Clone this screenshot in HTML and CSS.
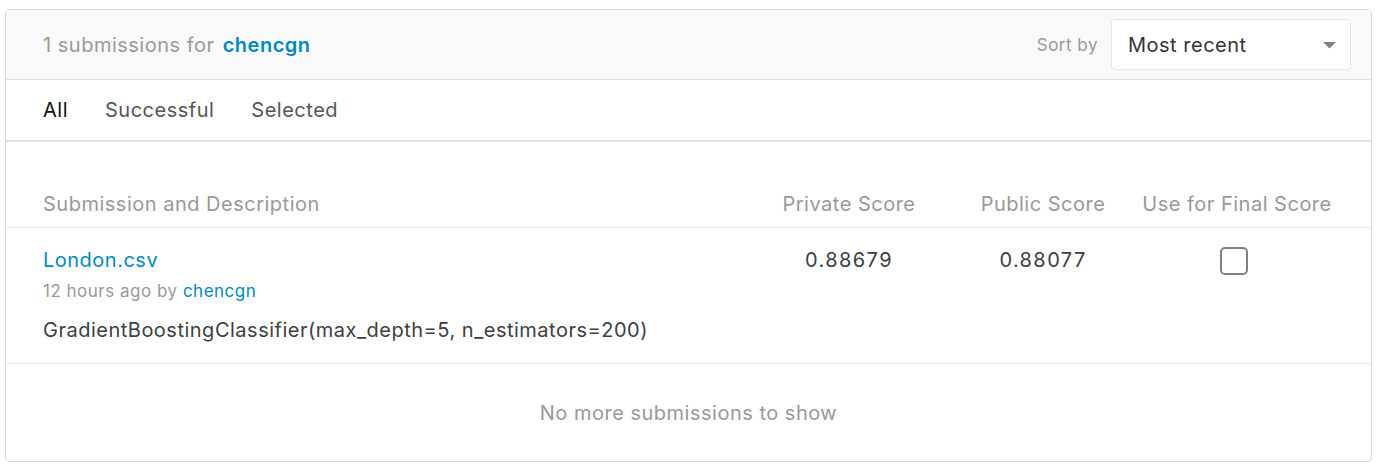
FILE: index.html
```html
<!DOCTYPE html>
<html>
<head>
<meta charset="utf-8">
<link rel="stylesheet" href="styles.css">
</head>
<body>
<div class="card">
  <div class="card-header">
    <div class="title">1 submissions for <a class="link strong" href="#">chencgn</a></div>
    <div class="sort">
      <span class="sort-label">Sort by</span>
      <div class="select">
        <span>Most recent</span>
        <svg class="caret" width="13" height="7" viewBox="0 0 13 7"><path d="M0 0 L13 0 L6.5 6.5 Z" fill="#808080"/></svg>
      </div>
    </div>
  </div>
  <div class="tabs">
    <span class="tab active">All</span>
    <span class="tab">Successful</span>
    <span class="tab">Selected</span>
  </div>
  <div class="table">
    <div class="thead">
      <div class="col-desc">Submission and Description</div>
      <div class="col-score">Private Score</div>
      <div class="col-score">Public Score</div>
      <div class="col-score">Use for Final Score</div>
    </div>
    <div class="row">
      <div class="col-desc">
        <a class="file link" href="#">London.csv</a>
        <div class="meta">12 hours ago by <a class="link" href="#">chencgn</a></div>
        <div class="desc">GradientBoostingClassifier(max_depth=5, n_estimators=200)</div>
      </div>
      <div class="col-score val">0.88679</div>
      <div class="col-score val">0.88077</div>
      <div class="col-score"><span class="checkbox"></span></div>
    </div>
    <div class="footer">No more submissions to show</div>
  </div>
</div>
</body>
</html>
```

FILE: styles.css
```css
* { box-sizing: border-box; }
body {
  margin: 0;
  background: #fff;
  font-family: Inter, "Noto Sans", sans-serif;
  color: #3c4043;
  letter-spacing: 0.5px;
}
.card {
  margin: 9px 0 0 5px;
  width: 1367px;
  border: 1px solid #dadada;
  border-radius: 4px;
  overflow: hidden;
}
.link { color: #008abc; text-decoration: none; }
.strong { font-weight: 600; }
.card-header {
  height: 70px;
  background: #f9f9f9;
  border-bottom: 1px solid #e0e0e0;
  display: flex;
  align-items: center;
  justify-content: space-between;
  padding: 0 20px 0 37px;
}
.title { font-size: 20px; color: #999; }
.title .link { margin-left: 2px; }
.sort { display: flex; align-items: center; gap: 13px; }
.sort-label { font-size: 17px; color: #999; }
.select {
  width: 240px;
  height: 51px;
  background: #fff;
  border: 1px solid #e6e6e6;
  border-radius: 4px;
  display: flex;
  align-items: center;
  justify-content: space-between;
  padding: 0 14px 0 16px;
  font-size: 20px;
  color: #333;
}
.caret { margin-top: 1px; }
.tabs {
  height: 62px;
  border-bottom: 2px solid #e0e0e0;
  display: flex;
  align-items: center;
  gap: 37px;
  padding: 0 37px;
  font-size: 20px;
  color: #555;
}
.tab.active { color: #111; }
.thead, .row {
  display: grid;
  grid-template-columns: 1fr 194px 194px 194px;
  padding: 0 37px 0 37px;
}
.thead {
  padding-top: 50px;
  height: 86px;
  border-bottom: 1px solid #ebebeb;
  font-size: 20px;
  line-height: 24px;
  color: #999;
  align-items: start;
}
.col-score { text-align: center; }
.row {
  padding-top: 19px;
  height: 136px;
  border-bottom: 1px solid #ebebeb;
  align-items: start;
}
.file { font-size: 20px; display: block; line-height: 26px; }
.meta { font-size: 17px; color: #999; margin-top: 7px; line-height: 22px; }
.desc { font-size: 20px; color: #3c4043; margin-top: 15px; line-height: 26px; }
.val { font-size: 20px; line-height: 26px; color: #3c4043; letter-spacing: 1.4px; }
.checkbox {
  display: inline-block;
  width: 28px;
  height: 28px;
  border: 2px solid #808080;
  border-radius: 5px;
  margin-right: 6px;
}
.footer {
  height: 97px;
  display: flex;
  align-items: center;
  justify-content: center;
  font-size: 20px;
  color: #999;
}
```
